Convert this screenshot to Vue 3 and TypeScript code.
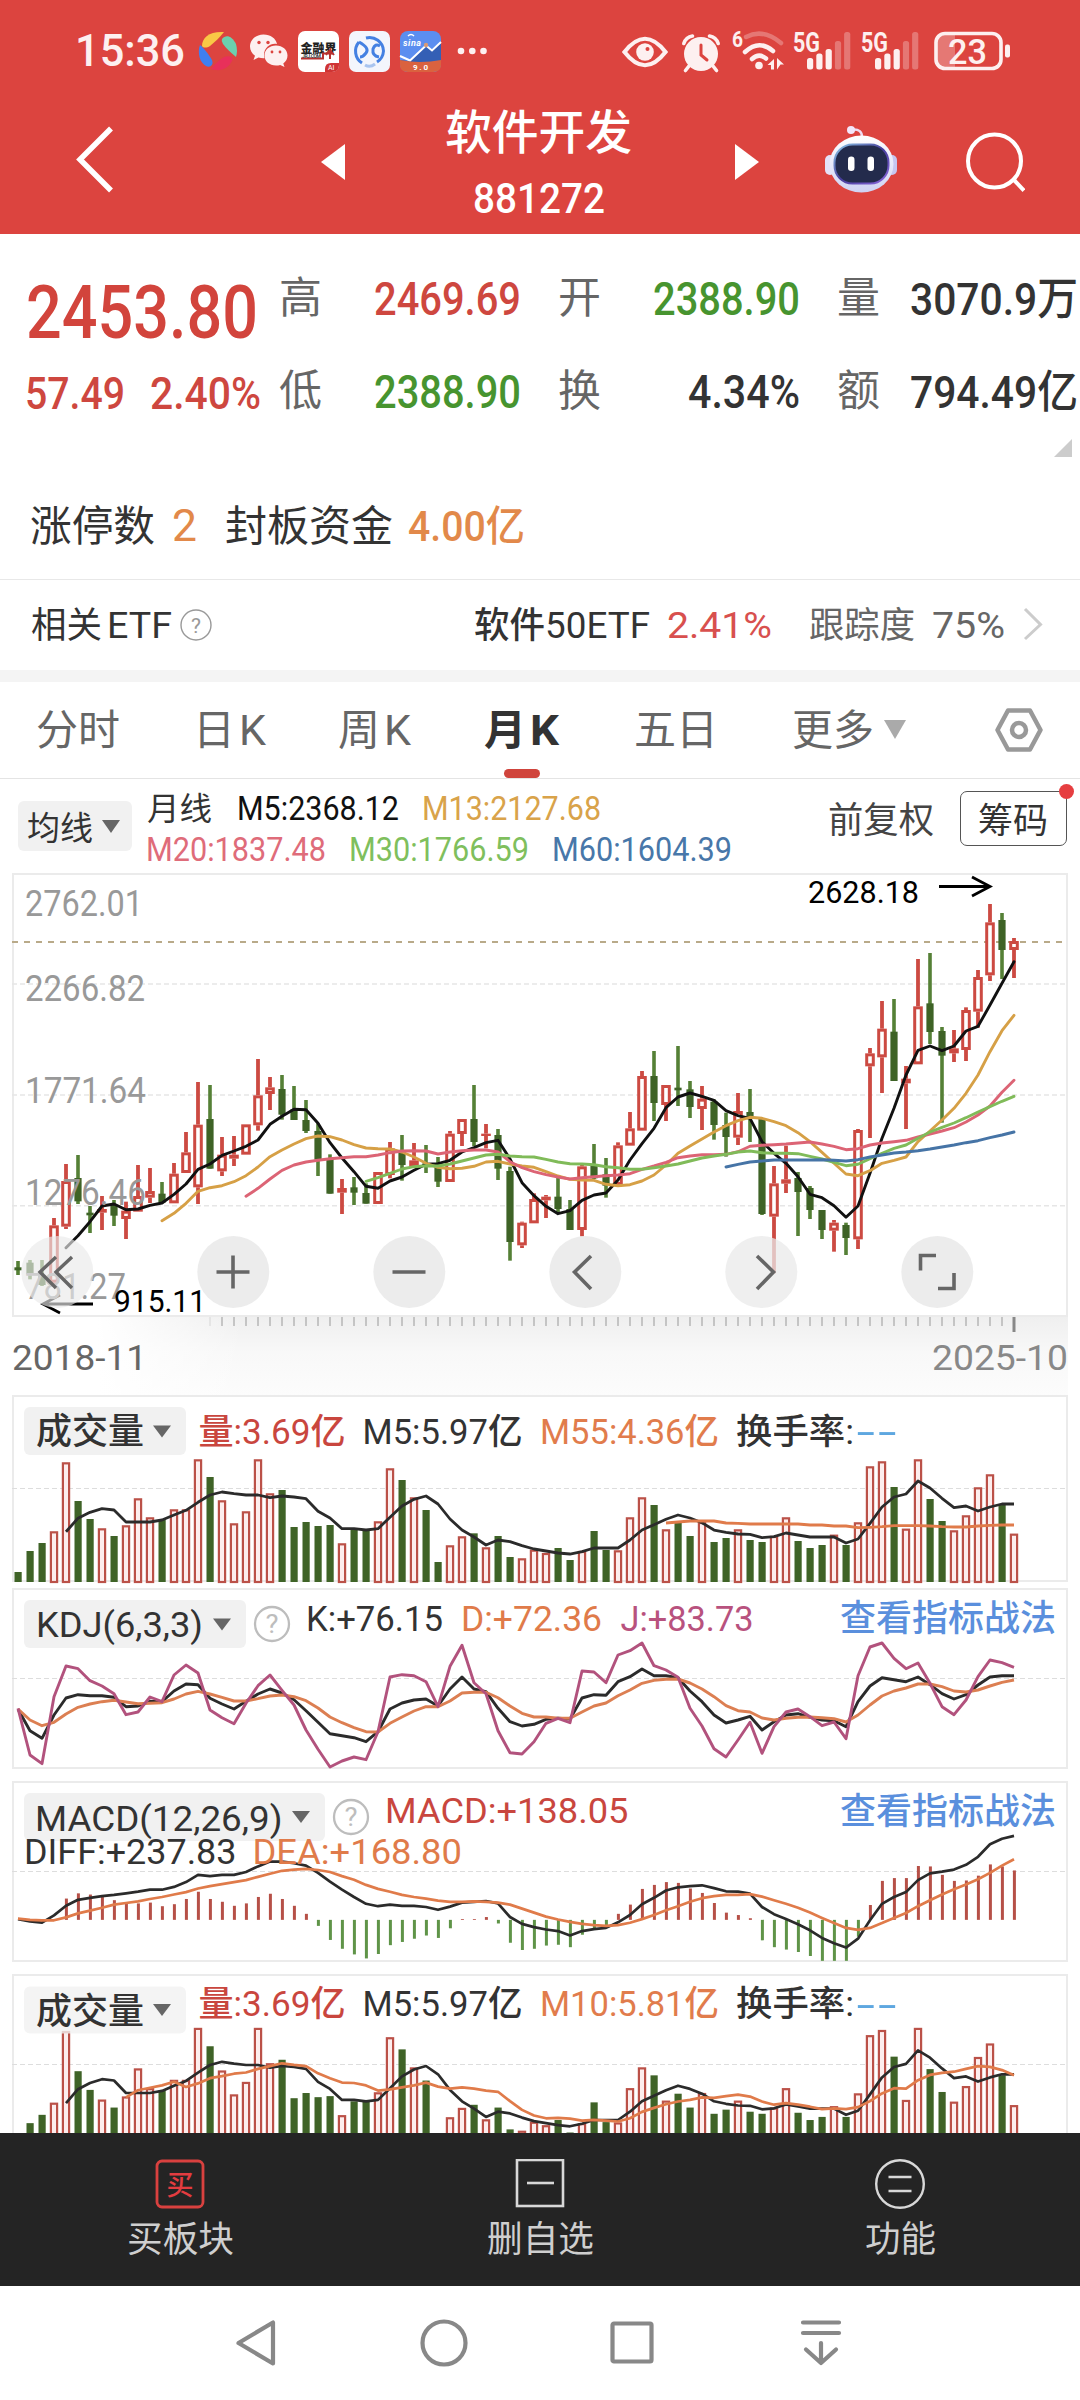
<script setup lang="ts">
import { defineComponent, h } from 'vue'

/* One line of text condensed to a given advance width; its bottom edge is the baseline. */
const Fit = defineComponent({
  props: {
    t: { type: String, required: true },
    w: { type: Number, required: true },
    s: { type: Number, required: true },
  },
  setup(p) {
    return () =>
      h('svg', { class: 'fit', width: p.w, height: p.s }, [
        h('text', { x: 0, y: p.s, 'font-size': p.s, textLength: p.w, lengthAdjust: 'spacingAndGlyphs' }, p.t),
      ])
  },
})

type Label = { t: string; x: number; y: number; w: number; s: number; c: string; b?: number }
type Scale = (v: number) => number

const X0 = 18
const STEP = 12
const px = (i: number) => X0 + STEP * i
const r1 = (v: number) => Math.round(v * 10) / 10
const line = (start: number, vals: number[], y: Scale) =>
  vals.map((v, k) => `${px(start + k)},${r1(y(v))}`).join(' ')

/* vertical scales of the panels */
const yMain: Scale = (v) => 1030 + v / 3
const yVol: Scale = (v) => 1390 + v / 3
const yMacd: Scale = (v) => 1770 + v / 2.489
const yVol2: Scale = (v) => 2155.7 - ((577 - v) / 3) * 1.039

/* high, body top, body bottom, low */
const ohlc: number[][] = [
  [693, 712, 721, 735], [690, 698, 733, 748], [690, 735, 765, 768], [564, 586, 758, 765], [402, 453, 590, 597],
  [375, 444, 514, 522], [528, 548, 556, 609], [498, 537, 548, 600], [510, 525, 557, 588], [515, 542, 567, 627],
  [405, 498, 545, 545], [414, 483, 503, 519], [456, 491, 518, 520], [399, 431, 520, 520], [306, 367, 429, 429],
  [156, 284, 472, 522], [165, 267, 416, 416], [321, 374, 424, 438], [318, 374, 386, 408], [283, 283, 374, 374],
  [87, 196, 286, 302], [141, 172, 192, 240], [135, 177, 254, 269], [168, 238, 270, 270], [210, 270, 303, 309],
  [280, 303, 389, 438], [373, 390, 491, 491], [447, 474, 488, 552], [441, 472, 488, 525], [460, 489, 521, 521],
  [426, 426, 522, 522], [336, 355, 435, 445], [315, 365, 405, 452], [339, 391, 408, 408], [345, 400, 405, 429],
  [381, 400, 455, 471], [303, 311, 456, 456], [267, 267, 312, 348], [165, 267, 336, 348], [282, 311, 318, 355],
  [297, 315, 416, 450], [410, 423, 636, 692], [575, 578, 646, 654], [490, 507, 580, 580], [495, 500, 511, 564],
  [444, 500, 537, 550], [510, 537, 600, 600], [405, 409, 600, 619], [342, 408, 445, 447], [384, 433, 467, 503],
  [337, 346, 465, 468], [246, 295, 347, 347], [123, 138, 302, 302], [63, 138, 219, 273], [165, 165, 225, 273],
  [48, 173, 181, 228], [153, 178, 231, 264], [168, 206, 237, 300], [208, 215, 285, 329], [248, 285, 321, 380],
  [189, 243, 323, 345], [177, 246, 262, 336], [265, 267, 552, 555], [408, 460, 560, 730], [347, 448, 461, 489],
  [426, 444, 486, 618], [468, 474, 540, 567], [540, 540, 600, 627], [570, 578, 602, 665], [578, 585, 624, 675],
  [297, 300, 628, 657], [54, 70, 109, 324], [-87, -4, 82, 189], [-93, 5, 153, 153], [108, 146, 160, 297],
  [-213, -71, 103, 103], [-231, -80, 6, 42], [-9, 3, 77, 278], [0, 55, 70, 96], [-68, -60, 60, 93],
  [-180, -159, -55, -7], [-378, -323, -164, -147], [-351, -330, -240, -153], [-276, -267, -240, -156],
]
const rising =
  'gggrrggrgrrrgrrrgrrrrrggggg' + 'rggrrgrggrrgrggrrrggrggrrrgrggrgg' + 'rggrrgggrgrrrgrrggrrrrgr'
const up = ohlc.map((_, i) => rising[i] === 'r')

const ma5 = [653, 617, 575, 528, 522, 539, 537, 526, 519, 493, 462, 418, 402, 376, 363, 349, 330, 283, 259, 238, 239, 280, 338, 384, 425, 469, 475, 453, 441, 421, 403, 401, 391, 366, 353, 338, 331, 387, 458, 497, 529, 551, 542, 511, 495, 489, 450, 390, 341, 295, 233, 201, 189, 199, 211, 242, 257, 265, 335, 370, 400, 440, 493, 503, 527, 562, 528, 430, 325, 235, 135, 61, 48, 62, 48, 3, -11, -75, -140, -205]
const ma13 = [572, 550, 520, 484, 473, 467, 455, 437, 411, 380, 360, 342, 326, 318, 320, 330, 344, 354, 356, 357, 366, 381, 400, 412, 416, 415, 409, 396, 394, 402, 408, 412, 425, 438, 448, 450, 451, 463, 467, 464, 453, 435, 405, 370, 348, 327, 306, 287, 272, 262, 265, 275, 287, 308, 335, 367, 400, 432, 437, 422, 400, 391, 381, 335, 303, 270, 235, 190, 135, 65, 2, -44]
const ma20 = [499, 475, 447, 421, 405, 396, 391, 386, 383, 380, 380, 375, 368, 363, 362, 363, 372, 366, 362, 360, 360, 366, 395, 413, 425, 434, 441, 447, 443, 440, 437, 435, 431, 418, 408, 397, 383, 378, 374, 374, 373, 365, 349, 346, 344, 342, 339, 336, 342, 349, 359, 356, 345, 339, 335, 331, 321, 312, 303, 293, 276, 255, 228, 187, 151]
const ma30 = [454, 443, 430, 417, 410, 407, 408, 402, 393, 384, 375, 373, 378, 380, 381, 388, 396, 401, 402, 404, 410, 413, 418, 418, 413, 408, 402, 393, 384, 378, 373, 366, 363, 368, 370, 370, 371, 379, 387, 397, 407, 403, 386, 370, 355, 345, 325, 306, 292, 279, 263, 246, 230, 214, 199]
const ma60 = [411, 403, 396, 393, 390, 390, 390, 390, 389, 391, 393, 389, 381, 375, 369, 366, 362, 357, 351, 345, 338, 332, 323, 315, 306]

const vol = [546, 483, 459, 424, 217, 333, 387, 415, 438, 406, 325, 382, 388, 358, 358, 208, 261, 331, 400, 364, 208, 310, 300, 411, 396, 408, 405, 460, 420, 417, 394, 235, 270, 322, 360, 516, 466, 439, 430, 472, 438, 501, 505, 479, 489, 474, 510, 483, 423, 480, 481, 382, 322, 345, 418, 398, 438, 396, 456, 444, 418, 450, 456, 438, 382, 453, 474, 465, 434, 465, 397, 229, 214, 291, 416, 208, 327, 393, 421, 376, 292, 253, 345, 431]
const vol5 = [425, 385, 367, 356, 360, 396, 396, 396, 390, 375, 361, 337, 315, 306, 311, 315, 315, 323, 318, 321, 326, 364, 384, 416, 416, 420, 416, 382, 348, 328, 318, 342, 387, 420, 441, 465, 450, 455, 467, 477, 483, 489, 492, 485, 474, 474, 474, 450, 420, 404, 388, 375, 384, 398, 420, 427, 432, 433, 443, 440, 429, 435, 441, 441, 441, 459, 447, 400, 351, 321, 312, 273, 294, 325, 353, 348, 363, 351, 342, 342]
const vol55 = [399, 396, 393, 393, 393, 399, 400, 402, 402, 402, 402, 402, 405, 405, 408, 408, 413, 412, 410, 407, 407, 407, 408, 410, 411, 411, 408, 406, 405, 405]
const vol10 = [815, 797, 791, 785, 776, 789, 780, 767, 762, 756, 753, 744, 737, 730, 734, 737, 755, 767, 778, 779, 785, 798, 795, 790, 785, 778, 788, 793, 790, 793, 798, 801, 824, 846, 860, 867, 866, 868, 873, 871, 873, 875, 867, 851, 841, 832, 825, 821, 815, 816, 812, 808, 813, 825, 833, 829, 833, 838, 844, 842, 844, 839, 824, 805, 792, 793, 772, 759, 754, 751, 744, 737, 739, 747, 760]

const kdjK = [958, 1022, 1045, 975, 924, 914, 917, 917, 922, 950, 948, 934, 935, 903, 882, 884, 925, 942, 957, 934, 912, 897, 909, 929, 962, 997, 1031, 1037, 1043, 1055, 1025, 957, 939, 930, 927, 948, 897, 861, 897, 905, 955, 995, 1008, 1003, 988, 985, 987, 924, 914, 916, 875, 860, 837, 857, 857, 863, 903, 935, 975, 999, 990, 979, 1020, 995, 975, 971, 982, 990, 992, 1010, 935, 888, 863, 869, 875, 861, 884, 911, 927, 914, 885, 861, 857, 857]
const kdjD = [957, 990, 1007, 997, 972, 952, 942, 935, 931, 936, 941, 940, 938, 927, 912, 904, 912, 922, 933, 933, 926, 918, 915, 920, 932, 954, 981, 998, 1013, 1025, 1026, 1000, 981, 963, 950, 950, 933, 909, 907, 907, 923, 948, 970, 981, 981, 985, 985, 966, 948, 939, 917, 900, 880, 871, 868, 867, 879, 897, 920, 947, 962, 966, 984, 990, 985, 982, 981, 983, 986, 996, 975, 945, 918, 903, 894, 882, 882, 890, 903, 906, 900, 888, 877, 870]
const kdjJ = [955, 1095, 1121, 920, 828, 836, 872, 888, 911, 974, 966, 921, 935, 855, 825, 849, 960, 983, 1001, 940, 887, 855, 901, 945, 1020, 1078, 1131, 1113, 1101, 1109, 1025, 861, 854, 857, 875, 950, 829, 766, 878, 911, 1022, 1088, 1092, 1055, 1000, 985, 998, 843, 846, 878, 795, 782, 759, 827, 840, 862, 955, 1008, 1076, 1101, 1050, 997, 1090, 1010, 966, 957, 980, 1007, 996, 1046, 857, 771, 759, 805, 836, 819, 880, 950, 974, 930, 860, 810, 818, 832]

const diff = [371, 377, 380, 362, 338, 323, 318, 314, 311, 307, 303, 298, 298, 291, 279, 261, 264, 261, 261, 254, 240, 228, 228, 232, 238, 256, 278, 298, 316, 333, 339, 335, 338, 338, 341, 348, 340, 330, 328, 326, 332, 366, 383, 391, 397, 401, 412, 401, 396, 393, 379, 361, 334, 318, 300, 292, 289, 287, 294, 302, 303, 308, 341, 359, 371, 384, 399, 418, 431, 442, 420, 374, 333, 316, 304, 274, 257, 253, 248, 236, 216, 185, 171, 164]
const dea = [370, 373, 374, 374, 367, 357, 350, 343, 335, 331, 327, 321, 316, 310, 304, 295, 289, 284, 279, 274, 266, 258, 251, 248, 246, 249, 254, 264, 273, 286, 296, 303, 311, 316, 320, 325, 328, 328, 327, 328, 330, 335, 345, 355, 365, 372, 378, 383, 386, 388, 386, 380, 371, 361, 349, 339, 328, 319, 314, 311, 311, 309, 315, 324, 333, 343, 355, 368, 381, 393, 398, 393, 381, 368, 356, 339, 324, 310, 297, 285, 272, 256, 238, 222]
const macd = [320, 307, 310, 314, 324, 332, 332, 330, 339, 334, 321, 303, 321, 328, 338, 332, 316, 308, 321, 338, 358, 388, 423, 445, 459, 469, 458, 436, 428, 420, 412, 418, 394, 371, 371, 366, 382, 430, 448, 445, 437, 435, 441, 410, 396, 387, 358, 335, 296, 286, 279, 281, 295, 306, 331, 355, 361, 369, 424, 441, 447, 453, 463, 475, 475, 475, 415, 336, 276, 269, 269, 239, 240, 261, 276, 275, 263, 235, 240, 250]

const bars = (y: Scale, base: number) => vol.map((v, i) => ({ i, up: up[i], y: y(v), h: base - y(v) }))
const volBars = bars(yVol, 1582)
const vol2Bars = bars(yVol2, 2155)
const ticks = Array.from({ length: 67 }, (_, k) => 16 + k)

const mainLabels: Label[] = [
  { t: '2762.01', x: 25, y: 916, w: 118, s: 36, c: '#999' },
  { t: '2266.82', x: 25, y: 1001, w: 120, s: 36, c: '#999' },
  { t: '1771.64', x: 25, y: 1103, w: 121, s: 36, c: '#999' },
  { t: '1276.46', x: 25, y: 1204.7, w: 121, s: 36, c: '#999' },
  { t: '781.27', x: 25, y: 1299, w: 101, s: 36, c: '#999' },
  { t: '2628.18', x: 808, y: 903.3, w: 111, s: 31, c: '#000', b: 400 },
  { t: '915.11', x: 114, y: 1312, w: 92, s: 31, c: '#000', b: 400 },
  { t: '2018-11', x: 12, y: 1369.7, w: 135, s: 35, c: '#666' },
  { t: '2025-10', x: 932, y: 1369.7, w: 136, s: 35, c: '#888' },
]
const volLegend = (base: number, chipBase: number, m: string): Label[] => [
  { t: '成交量', x: 36, y: chipBase, w: 108, s: 36, c: '#333' },
  { t: '量:3.69亿', x: 198.5, y: base, w: 147, s: 35.5, c: '#c9463e' },
  { t: 'M5:5.97亿', x: 362.5, y: base, w: 160, s: 35.5, c: '#333' },
  { t: m, x: 540, y: base, w: 179, s: 35.5, c: '#e17c4c' },
  { t: '换手率:', x: 736, y: base, w: 118, s: 35.5, c: '#333' },
]
const vol1Labels = volLegend(1443.5, 1444, 'M55:4.36亿')
const vol2Labels = volLegend(2016.3, 2023.5, 'M10:5.81亿')
const kdjLabels: Label[] = [
  { t: 'KDJ(6,3,3)', x: 36, y: 1637.3, w: 167, s: 35, c: '#333' },
  { t: 'K:+76.15', x: 306, y: 1630.7, w: 137, s: 35, c: '#333' },
  { t: 'D:+72.36', x: 461, y: 1630.7, w: 141, s: 35, c: '#e07b4a' },
  { t: 'J:+83.73', x: 620.5, y: 1630.7, w: 133, s: 35, c: '#b8527e' },
  { t: '查看指标战法', x: 840, y: 1631, w: 216, s: 36, c: '#5a8fdd' },
]
const macdLabels: Label[] = [
  { t: 'MACD(12,26,9)', x: 35, y: 1831, w: 247.5, s: 35, c: '#333' },
  { t: 'MACD:+138.05', x: 385, y: 1823.3, w: 243.5, s: 35, c: '#c9463e' },
  { t: 'DIFF:+237.83', x: 24, y: 1864, w: 212.5, s: 35, c: '#333' },
  { t: 'DEA:+168.80', x: 252.5, y: 1864, w: 209.5, s: 35, c: '#e07b4a' },
  { t: '查看指标战法', x: 840, y: 1823.8, w: 216, s: 36, c: '#5a8fdd' },
]
const signals = [0, 1]
const signalBars = [
  [13, 58, 1], [22.3, 53.5, 1], [31.6, 49, 1], [40.9, 41, 0.3], [50.1, 32, 0.3],
]
</script>

<template>
  <div class="screen">
    <header class="top">
      <div class="status">
        <Fit class="clock" t="15:36" :w="110" :s="43.5" />
        <svg class="s-swirl" width="40" height="40" viewBox="0 0 40 40">
          <path d="M4 15C4 6 12 0 26 1C22 6 17 11 12 15C9 17 5 17 4 15Z" fill="#f9c846" />
          <path d="M24 8C28 3 34 5 38 13Q40 20 38 26C33 22 28 17 25 13Q23 10 24 8Z" fill="#6cd0ae" />
          <path d="M2 14C6 17 11 24 14 29C16 34 12 37 8 35C2 32 -1 22 2 14Z" fill="#3f7ff0" />
          <path d="M13 38C16 34 21 29 26 26C32 24 36 27 34 30C30 38 22 41 13 38Z" fill="#e8305a" />
        </svg>
        <svg class="s-wechat" width="38" height="34" viewBox="0 0 38 34" fill="#fdf0f0">
          <path d="M13.500 0.500C6 .5 0 5.500 0 12.500c0 4 2 7 5 9.200L3.500 26l5-2.500c2 .6 4 .8 6 .7C12 15 20 8.500 27 10C26 4.500 20.500 .5 13.500 .5z" />
          <path d="M26 11.500c-6.500 0-11.500 4.300-11.500 10S19.500 31.500 26 31.500c1.500 0 3-.2 4.200-.6l4.300 2.200-1.200-3.600c2.700-2 4.200-4.700 4.200-8C37.500 15.800 32.500 11.500 26 11.500z" />
          <g fill="#dc443f"><circle cx="9" cy="8.500" r="1.700" /><circle cx="18" cy="8.500" r="1.700" /><circle cx="22" cy="18" r="1.400" /><circle cx="30" cy="18" r="1.400" /></g>
        </svg>
        <svg class="s-app" width="41" height="41" viewBox="0 0 41 41">
          <rect width="41" height="41" rx="7" fill="#fff" />
          <text x="2.500" y="22" font-size="12" font-weight="900" textLength="36" fill="#222">金融界</text>
          <path d="M3 27.500h22v-5h10M32 28v-9l-4 5M32 19l4 5" stroke="#b8312f" stroke-width="2" fill="none" />
          <text x="4" y="26.500" font-size="5" font-weight="700" textLength="19" fill="#444">JRJ.COM</text>
          <path d="M27 41v-3q0-6 6-6h8v2q0 7-7 7z" fill="#cf3434" />
          <text x="30" y="39" font-size="7" fill="#fff">AI</text>
        </svg>
        <svg class="s-app" width="41" height="41" viewBox="0 0 41 41">
          <rect width="41" height="41" rx="7" fill="#f3f5fc" />
          <g fill="none" stroke="#4480e2" stroke-width="3">
            <path d="M17 7A14 14 0 0 1 34.500 20A14 14 0 0 1 28 31" />
            <path d="M10 11A14 14 0 0 0 13 32" />
            <path d="M10 11Q21 17 17 22Q14 26 11 26M30 26Q23 25 24 18Q26 12 31 15" />
          </g>
          <path d="M16 34Q21 37 26 33" stroke="#a9c4ef" stroke-width="3" fill="none" />
        </svg>
        <svg class="s-app" width="41" height="41" viewBox="0 0 41 41">
          <rect width="41" height="41" rx="8" fill="#5b8ef0" />
          <path d="M0 29L10 30L26 15L32 20L41 12V33H0z" fill="#345fb5" />
          <path d="M0 25L10 29.500L26 14.500L32 19.500L41 11" fill="none" stroke="#fff" stroke-width="2" />
          <path d="M0 29q20 4 41 0v5q0 7-8 7H8q-8 0-8-7z" fill="#da623f" />
          <text x="3" y="15" font-size="9" font-weight="700" font-style="italic" textLength="18" fill="#fff">sina</text>
          <path d="M8 5q3-3 6 0" stroke="#fff" stroke-width="1.500" fill="none" />
          <circle cx="26" cy="14" r="2.200" fill="#d89a76" />
          <text x="13" y="39" font-size="8" font-weight="700" textLength="15" fill="#fff">9.0</text>
        </svg>
        <svg class="s-dots" width="30" height="8" viewBox="0 0 30 8" fill="#fdf0f0">
          <circle cx="4" cy="4" r="3.300" /><circle cx="15.300" cy="4" r="3.300" /><circle cx="26.500" cy="4" r="3.300" />
        </svg>
        <svg class="s-eye" width="46" height="32" viewBox="0 0 46 32">
          <path d="M2.500 16Q23-10.500 43.500 16Q23 42.500 2.500 16z" fill="none" stroke="#fdf0f0" stroke-width="4.200" />
          <circle cx="23" cy="16" r="8.800" fill="#fdf0f0" /><circle cx="25.500" cy="13" r="2" fill="#dc443f" />
        </svg>
        <svg class="s-alarm" width="38" height="38" viewBox="0 0 38 38">
          <circle cx="19" cy="20" r="17" fill="#fdf0f0" />
          <path d="M1.800 9.500Q4 3 10.500 2M36.200 9.500Q34 3 27.500 2M7 32l-3.500 4.500M31 32l3.500 4.500" fill="none" stroke="#fdf0f0" stroke-width="3.600" stroke-linecap="round" />
          <path d="M19 11v10l6 5" fill="none" stroke="#dc443f" stroke-width="3" stroke-linecap="round" />
        </svg>
        <svg class="s-wifi" width="54" height="42" viewBox="0 0 54 42">
          <text x="0" y="16.500" font-size="22" font-weight="700" textLength="11" lengthAdjust="spacingAndGlyphs" fill="#fdf0f0">6</text>
          <g fill="none" stroke="#fdf0f0" stroke-linecap="round">
            <path d="M14 7Q31-2 49 13" stroke-width="4.500" opacity=".3" />
            <path d="M13 22Q27 9 41 21" stroke-width="4.500" />
            <path d="M20 29Q27 22.500 34 28.500" stroke-width="4.500" />
          </g>
          <circle cx="27" cy="35.500" r="3.800" fill="#fdf0f0" />
          <path d="M42 29v10.500h-3V35h-3.500zM45 28l7 6.500h-3.500L45 39.500z" fill="#fdf0f0" />
        </svg>
        <svg v-for="n in signals" :key="n" class="s-signal" width="58" height="42" viewBox="0 30 58 42" fill="#fdf0f0">
          <text x="-1" y="51.500" font-size="27" font-weight="700" textLength="27" lengthAdjust="spacingAndGlyphs">5G</text>
          <rect v-for="b in signalBars" :key="b[0]" :x="b[0]" :y="b[1]" width="6.200" :height="69.500 - b[1]" rx="2.500" :opacity="b[2]" />
        </svg>
        <svg class="s-battery" width="77" height="40" viewBox="0 0 77 40">
          <path d="M3 9q0-6 6-6h12v34H9q-6 0-6-6z" fill="#fff" opacity=".28" />
          <rect x="2" y="2.500" width="65" height="35" rx="9" fill="none" stroke="#fdf0f0" stroke-width="3.600" />
          <rect x="71" y="13.500" width="5" height="13" rx="2" fill="#fdf0f0" />
          <text x="14" y="32.500" font-size="35" font-weight="500" textLength="39" lengthAdjust="spacingAndGlyphs" fill="#fdf0f0">23</text>
        </svg>
      </div>
      <div class="title-row">
        <svg class="back" width="40" height="68" viewBox="0 0 40 68"><path d="M36 3.500L5 34.500L36 65.500" fill="none" stroke="#fff" stroke-width="5.500" /></svg>
        <svg class="prev" width="24" height="36" viewBox="0 0 24 36"><path d="M24 0v36L0 18z" fill="#fff" /></svg>
        <div class="title">
          <Fit t="软件开发" :w="187" :s="46.500" />
          <Fit class="code" t="881272" :w="132" :s="42" />
        </div>
        <svg class="next" width="24" height="36" viewBox="0 0 24 36"><path d="M0 0v36L24 18z" fill="#fff" /></svg>
        <svg class="bot" width="74" height="68" viewBox="0 0 74 68">
          <defs>
            <linearGradient id="shell" x1="0" y1="0" x2="0" y2="1"><stop offset="0" stop-color="#fff" /><stop offset="1" stop-color="#cfd2f3" /></linearGradient>
            <linearGradient id="rim" x1="0" y1="0" x2="1" y2="1"><stop offset="0" stop-color="#8cc9e8" /><stop offset=".5" stop-color="#463c9c" /><stop offset="1" stop-color="#8c68dc" /></linearGradient>
          </defs>
          <path d="M38 12Q38 4 29 4.500" fill="none" stroke="#f0dcf2" stroke-width="2.500" />
          <circle cx="27" cy="5" r="4" fill="#f3e6fa" />
          <rect x="1" y="30" width="10" height="20" rx="5" fill="#e4e2f8" /><rect x="63" y="30" width="10" height="20" rx="5" fill="#c6c6f0" />
          <ellipse cx="37.500" cy="39" rx="32" ry="28.500" fill="url(#shell)" />
          <rect x="10.500" y="19.500" width="54" height="39" rx="18" fill="#232b4c" stroke="url(#rim)" stroke-width="2" />
          <rect x="24" y="31.500" width="6.500" height="14.500" rx="3.200" fill="#fff" /><rect x="43.500" y="31.500" width="6.500" height="14.500" rx="3.200" fill="#fff" />
        </svg>
        <svg class="search" width="60" height="62" viewBox="0 0 60 62" fill="none" stroke="#fff" stroke-width="4"><circle cx="29.500" cy="30" r="26.500" /><path d="M49 49l10 10.500" /></svg>
      </div>
    </header>

    <section class="quote">
      <div class="price">
        <Fit class="big red" t="2453.80" :w="232" :s="74" />
        <div class="change red"><Fit t="57.49" :w="100" :s="45" /><Fit t="2.40%" :w="111" :s="45" /></div>
      </div>
      <div class="stats">
        <Fit class="k" t="高" :w="43" :s="43" /><Fit class="red" t="2469.69" :w="147" :s="46" />
        <Fit class="k" t="开" :w="43" :s="43" /><Fit class="green" t="2388.90" :w="147" :s="46" />
        <Fit class="k" t="量" :w="43" :s="43" /><Fit t="3070.9万" :w="168" :s="45" />
        <Fit class="k" t="低" :w="43" :s="43" /><Fit class="green" t="2388.90" :w="147" :s="46" />
        <Fit class="k" t="换" :w="43" :s="43" /><Fit class="end" t="4.34%" :w="112" :s="46" />
        <Fit class="k" t="额" :w="43" :s="43" /><Fit t="794.49亿" :w="168" :s="45" />
      </div>
    </section>
    <div class="corner"></div>
    <section class="limits">
      <Fit t="涨停数" :w="125" :s="42" /><Fit class="orange" t="2" :w="25" :s="44" />
      <Fit t="封板资金" :w="168" :s="42" /><Fit class="orange strong" t="4.00亿" :w="117" :s="42" />
    </section>
    <section class="etf">
      <Fit t="相关" :w="71" :s="36" /><Fit t="ETF" :w="65" :s="37" />
      <svg class="help" width="32" height="32" viewBox="0 0 32 32"><circle cx="16" cy="16" r="15" fill="none" stroke="#999" stroke-width="1.400" /><text x="11" y="23.500" font-size="21" textLength="10" lengthAdjust="spacingAndGlyphs" fill="#999">?</text></svg>
      <Fit class="name" t="软件" :w="71" :s="36" /><Fit class="name" t="50ETF" :w="105" :s="37" />
      <Fit class="rise" t="2.41%" :w="105" :s="37" /><Fit class="grey" t="跟踪度" :w="106" :s="36" /><Fit class="grey" t="75%" :w="73" :s="37" />
      <svg class="help" width="22" height="34" viewBox="0 0 22 34"><path d="M3 2l15.500 15.500L3 32" fill="none" stroke="#ccc" stroke-width="3" /></svg>
    </section>
    <div class="band"></div>

    <nav class="tabs">
      <Fit t="分时" :w="84" :s="42" />
      <div class="tab"><Fit t="日" :w="42" :s="42" /><Fit t="K" :w="27" :s="43" /></div>
      <div class="tab"><Fit t="周" :w="42" :s="42" /><Fit t="K" :w="27" :s="43" /></div>
      <div class="tab active"><Fit t="月" :w="42" :s="42" /><Fit t="K" :w="29" :s="43" /></div>
      <Fit t="五日" :w="84" :s="42" />
      <Fit t="更多" :w="82" :s="42" />
      <svg class="more" width="22" height="19" viewBox="0 0 22 19"><path d="M0 0h22L11 19z" fill="#aaa" /></svg>
      <svg class="hex" width="48" height="46" viewBox="0 0 48 46" fill="none" stroke="#999" stroke-width="4.500" stroke-linejoin="round"><path d="M13 3.500h22L45.500 23L35 42.500H13L2.500 23z" /><circle cx="24" cy="23" r="7" /></svg>
    </nav>

    <section class="legend">
      <div class="chip"><Fit t="均线" :w="66" :s="33" /><svg width="18" height="13" viewBox="0 0 18 13"><path d="M0 0h18L9 13z" fill="#666" /></svg></div>
      <div class="averages">
        <div class="line1"><Fit class="reg" t="月线" :w="65" :s="32" /><Fit class="m5" t="M5:2368.12" :w="162" :s="33" /><Fit class="m13" t="M13:2127.68" :w="179" :s="33" /></div>
        <div class="line2"><Fit class="m20" t="M20:1837.48" :w="180" :s="33" /><Fit class="m30" t="M30:1766.59" :w="180" :s="33" /><Fit class="m60" t="M60:1604.39" :w="180" :s="33" /></div>
      </div>
      <Fit class="adjust" t="前复权" :w="106" :s="36" />
      <div class="chips-btn"><Fit t="筹码" :w="70" :s="35" /><i></i></div>
    </section>

    <svg class="chart" width="1080" height="522" viewBox="0 873 1080 522">
      <defs>
        <linearGradient id="axisX" x1="0" x2="1"><stop offset="0.080" stop-color="#fff" /><stop offset=".22" stop-color="#fff" stop-opacity="0" /></linearGradient>
        <linearGradient id="axisY" x1="0" y1="0" x2="0" y2="1"><stop offset="0" stop-color="#efefef" /><stop offset=".45" stop-color="#f8f8f8" /><stop offset="1" stop-color="#fcfcfc" /></linearGradient>
      </defs>
      <rect x="12" y="1317" width="1056" height="78" fill="url(#axisY)" /><rect x="12" y="1317" width="1056" height="78" fill="url(#axisX)" />
      <rect x="13" y="874" width="1054" height="442" fill="#fff" stroke="#ebebeb" stroke-width="2" />
      <path d="M12 984H1066M12 1095H1066M12 1205.700H1066" stroke="#e6e6e6" stroke-width="1.600" stroke-dasharray="5 3" />
      <path d="M12 942H1066" stroke="#b9aa89" stroke-width="2" stroke-dasharray="6 6" />
      <g v-for="(c, i) in ohlc" :key="i">
        <template v-if="up[i]">
          <rect :x="px(i) - 1.900" :y="yMain(c[0])" width="3.800" :height="(c[1] - c[0]) / 3" fill="#cc4a42" />
          <rect :x="px(i) - 1.900" :y="yMain(c[2])" width="3.800" :height="(c[3] - c[2]) / 3" fill="#cc4a42" />
          <rect v-if="c[2] - c[1] > 18" :x="px(i) - 3.300" :y="yMain(c[1]) + 1.500" width="6.600" :height="(c[2] - c[1]) / 3 - 3" fill="#fff" stroke="#cc4a42" stroke-width="3" />
          <rect v-else :x="px(i) - 4.800" :y="yMain(c[1])" width="9.600" :height="(c[2] - c[1]) / 3" fill="#cc4a42" />
        </template>
        <template v-else>
          <rect :x="px(i) - 1.800" :y="yMain(c[0])" width="3.600" :height="(c[3] - c[0]) / 3" fill="#558036" />
          <rect :x="px(i) - 3.600" :y="yMain(c[1])" width="7.200" :height="(c[2] - c[1]) / 3" fill="#3e6326" />
        </template>
      </g>
      <g fill="none" stroke-width="2.900" stroke-linejoin="round" stroke-linecap="round">
        <polyline :points="line(4, ma5, yMain)" stroke="#111" />
        <polyline :points="line(12, ma13, yMain)" stroke="#d6a046" />
        <polyline :points="line(19, ma20, yMain)" stroke="#dc6475" />
        <polyline :points="line(29, ma30, yMain)" stroke="#80bb59" />
        <polyline :points="line(59, ma60, yMain)" stroke="#4674a6" />
      </g>
      <g fill="none" stroke="#000" stroke-width="2.800"><path d="M939 886.500H989M972 877l18 9.500l-18 9.500" /><path d="M93 1304H43M60 1295l-17 9l17 9" /></g>
      <path v-for="i in ticks" :key="i" :d="`M${px(i)} 1317v9`" stroke="#a0a0a0" stroke-width="1.100" :opacity="i === 16 ? 0.3 : 1" />
      <path d="M1014 1317v15" stroke="#888" stroke-width="3" />
      <text v-for="l in mainLabels" :key="l.t" :x="l.x" :y="l.y" :font-size="l.s" :fill="l.c" :font-weight="l.b ?? 450" :textLength="l.w" lengthAdjust="spacingAndGlyphs">{{ l.t }}</text>
      <circle v-for="n in 6" :key="n" :cx="57.300 + 176 * (n - 1)" cy="1272" r="36" fill="#e9e9e9" :fill-opacity="n === 1 ? 0.65 : n === 5 ? 0.75 : 0.88" />
      <g fill="none" stroke="#666" stroke-width="3.600">
        <path d="M56 1257l-16 15l16 16M72 1257l-16 15l16 16" stroke-width="3.400" />
        <path d="M216.500 1272h33M233 1255.500v33M392.500 1272h33" />
        <path d="M591 1256l-16.500 16l16.500 17M757 1256l16.500 16L757 1289" />
        <path d="M936 1255.500h-15.500v15M938 1288.500h16v-15.500" />
      </g>
    </svg>

    <svg class="chart" width="1080" height="193" viewBox="0 1395 1080 193">
      <rect x="13" y="1396" width="1054" height="185" fill="#fff" stroke="#ebebeb" stroke-width="2" />
      <path d="M12 1488.500H1066" stroke="#ddd" stroke-dasharray="5 3" stroke-width="1.200" />
      <template v-for="b in volBars" :key="b.i">
        <rect v-if="b.up" :x="px(b.i) - 3.100" :y="b.y + 1" width="6.200" :height="b.h - 1" fill="#fdeeee" stroke="#bb5148" stroke-width="2.200" />
        <rect v-else :x="px(b.i) - 3.500" :y="b.y" width="7.200" :height="b.h" fill="#3f6327" />
      </template>
      <g fill="none" stroke-width="2.800" stroke-linejoin="round">
        <polyline :points="line(4, vol5, yVol)" stroke="#2b2b2b" /><polyline :points="line(54, vol55, yVol)" stroke="#e07b4a" />
      </g>
      <rect x="24" y="1407" width="162" height="48" rx="6" fill="#f1f1f1" /><path d="M153 1425.500h18l-9 12z" fill="#666" />
      <text v-for="l in vol1Labels" :key="l.t" :x="l.x" :y="l.y" :font-size="l.s" :fill="l.c" :font-weight="l.b ?? 450" :textLength="l.w" lengthAdjust="spacingAndGlyphs">{{ l.t }}</text>
      <text class="dash" x="855" y="1443" font-size="36" textLength="43" lengthAdjust="spacingAndGlyphs">--</text>
    </svg>

    <svg class="chart" width="1080" height="193" viewBox="0 1588 1080 193">
      <rect x="13" y="1589" width="1054" height="179" fill="#fff" stroke="#ebebeb" stroke-width="2" />
      <path d="M12 1678.500H1066" stroke="#ddd" stroke-dasharray="5 3" stroke-width="1.200" />
      <g fill="none" stroke-width="2.900" stroke-linejoin="round">
        <polyline :points="line(0, kdjK, yVol)" stroke="#2b2b2b" /><polyline :points="line(0, kdjD, yVol)" stroke="#dc7f52" /><polyline :points="line(0, kdjJ, yVol)" stroke="#b2527d" />
      </g>
      <rect x="24" y="1600" width="222" height="48" rx="6" fill="#f1f1f1" /><path d="M213 1618.500h18l-9 12z" fill="#666" />
      <circle cx="272" cy="1624" r="17" fill="none" stroke="#bdbdbd" stroke-width="2.300" /><text x="265.500" y="1633" font-size="26" textLength="13" lengthAdjust="spacingAndGlyphs" fill="#bdbdbd">?</text>
      <text v-for="l in kdjLabels" :key="l.t" :x="l.x" :y="l.y" :font-size="l.s" :fill="l.c" :font-weight="l.b ?? 450" :textLength="l.w" lengthAdjust="spacingAndGlyphs">{{ l.t }}</text>
    </svg>

    <svg class="chart" width="1080" height="193" viewBox="0 1781 1080 193">
      <rect x="13" y="1782" width="1054" height="179" fill="#fff" stroke="#ebebeb" stroke-width="2" />
      <path d="M12 1871.500H1066" stroke="#ddd" stroke-dasharray="5 3" stroke-width="1.200" />
      <rect x="24" y="1793" width="301" height="48" rx="6" fill="#f1f1f1" /><path d="M292 1811h18l-9 12z" fill="#666" />
      <path v-for="(v, k) in macd" :key="k" :d="`M${px(k + 4) + 0.4} ${yMacd(373)}V${yMacd(v)}`" :stroke="v < 373 ? '#b65047' : '#5f9448'" stroke-width="3" />
      <g fill="none" stroke-width="2.700" stroke-linejoin="round">
        <polyline :points="line(0, diff, yMacd)" stroke="#2b2b2b" /><polyline :points="line(0, dea, yMacd)" stroke="#e07b4a" />
      </g>
      <circle cx="351" cy="1817" r="17" fill="none" stroke="#bdbdbd" stroke-width="2.300" /><text x="344.500" y="1826" font-size="26" textLength="13" lengthAdjust="spacingAndGlyphs" fill="#bdbdbd">?</text>
      <text v-for="l in macdLabels" :key="l.t" :x="l.x" :y="l.y" :font-size="l.s" :fill="l.c" :font-weight="l.b ?? 450" :textLength="l.w" lengthAdjust="spacingAndGlyphs">{{ l.t }}</text>
    </svg>

    <svg class="chart" width="1080" height="159" viewBox="0 1974 1080 159">
      <rect x="13" y="1975" width="1054" height="179" fill="#fff" stroke="#ebebeb" stroke-width="2" />
      <path d="M12 2064.500H1066" stroke="#ddd" stroke-dasharray="5 3" stroke-width="1.200" />
      <template v-for="b in vol2Bars" :key="b.i">
        <rect v-if="b.up" :x="px(b.i) - 3.100" :y="b.y + 1" width="6.200" :height="b.h - 1" fill="#fdeeee" stroke="#bb5148" stroke-width="2.200" />
        <rect v-else :x="px(b.i) - 3.500" :y="b.y" width="7.200" :height="b.h" fill="#3f6327" />
      </template>
      <g fill="none" stroke-width="2.700" stroke-linejoin="round">
        <polyline :points="line(4, vol5, yVol2)" stroke="#2b2b2b" /><polyline :points="line(9, vol10, yMacd)" stroke="#e07b4a" />
      </g>
      <rect x="24" y="1986.500" width="162" height="47" rx="6" fill="#f1f1f1" fill-opacity=".8" /><path d="M153 2004h18l-9 12z" fill="#666" />
      <text v-for="l in vol2Labels" :key="l.t" :x="l.x" :y="l.y" :font-size="l.s" :fill="l.c" :font-weight="l.b ?? 450" :textLength="l.w" lengthAdjust="spacingAndGlyphs">{{ l.t }}</text>
      <text class="dash" x="855" y="2015.500" font-size="36" textLength="43" lengthAdjust="spacingAndGlyphs">--</text>
    </svg>

    <footer class="actions">
      <div class="action">
        <svg width="50" height="50" viewBox="0 0 50 50"><rect x="2" y="2" width="46" height="46" rx="5" fill="none" stroke="#d9413f" stroke-width="2.800" /><text x="11.500" y="36" font-size="27" font-weight="500" textLength="27" fill="#e33c40">买</text></svg>
        <Fit t="买板块" :w="107" :s="36" />
      </div>
      <div class="action">
        <svg width="50" height="50" viewBox="0 0 50 50" fill="none" stroke="#d8d8d8" stroke-width="2.600"><rect x="2" y="1" width="46" height="46" /><path d="M12 24h27" /></svg>
        <Fit t="删自选" :w="107" :s="36" />
      </div>
      <div class="action">
        <svg width="52" height="50" viewBox="0 0 52 50" fill="none" stroke="#d8d8d8" stroke-width="2.400"><circle cx="26" cy="25" r="23.800" /><path d="M14.500 18h23M14.500 32h23" /></svg>
        <Fit t="功能" :w="71" :s="36" />
      </div>
    </footer>
    <div class="sysnav">
      <svg width="42" height="50" viewBox="0 0 42 50"><path d="M38 4.500v41L3.500 25z" /></svg>
      <svg width="50" height="50" viewBox="0 0 50 50"><circle cx="25" cy="25" r="21.500" /></svg>
      <svg width="46" height="50" viewBox="0 0 46 50"><rect x="3.500" y="5.500" width="39" height="38" rx="1.500" /></svg>
      <svg width="42" height="50" viewBox="0 0 42 50"><path d="M3 4.500h36M3 15h36M21 25v20M6 31.500l15 13.500l15-13.500" /></svg>
    </div>
  </div>
</template>

<style>
body {
  margin: 0;
}
.fit {
  display: block;
  overflow: visible;
}
.fit text {
  fill: currentColor;
}
</style>

<style scoped>
.screen {
  width: 1080px;
  height: 2400px;
  overflow: hidden;
  background: #fff;
  color: #333;
  font-family: Roboto, 'Noto Sans CJK SC', sans-serif;
}
svg {
  display: block;
  flex: none;
}
.dash {
  font-family: 'Liberation Sans', sans-serif;
  fill: #5ea7e0;
}
.top {
  height: 234px;
  background: #dc443f;
  color: #fff;
}
.status {
  display: flex;
  height: 101px;
  padding: 0 0 0 75px;
  align-items: center;
}
.status svg {
  margin-left: 10px;
  overflow: visible;
}
.status .clock {
  margin: -14px 13px 0 0;
  color: #fdf0f0;
  font-weight: 500;
}
.status .s-swirl {
  margin-left: 0;
  margin-top: 1px;
}
.status .s-wechat {
  margin-left: 12px;
  margin-top: 1px;
}
.status .s-app {
  margin-top: 1px;
}
.status .s-dots {
  margin-left: 16px;
}
.status .s-eye {
  margin-left: 135px;
  margin-top: 3px;
}
.status .s-alarm {
  margin-left: 14px;
  margin-top: 5px;
}
.status .s-wifi {
  margin-left: 12px;
  margin-top: 1px;
}
.status .s-signal {
  margin-left: 8px;
}
.status .s-signal + .s-signal {
  margin-left: 10px;
}
.status .s-battery {
  margin-left: 14px;
}
.title-row {
  display: flex;
  height: 133px;
}
.back {
  margin: 24px 0 0 75px;
}
.prev {
  margin: 43px 0 0 206px;
}
.title {
  display: flex;
  flex-direction: column;
  align-items: center;
  width: 187px;
  margin-left: 100px;
  padding-top: 1px;
  font-weight: 500;
}
.title .code {
  margin-top: 22px;
}
.next {
  margin: 43px 0 0 103px;
}
.bot {
  margin: 24px 0 0 65px;
}
.search {
  margin: 30px 0 0 67px;
}
.red {
  color: #ce473f;
}
.green {
  color: #47942f;
}
.orange {
  color: #e2894a;
}
.quote {
  display: flex;
  height: 205px;
  font-weight: 500;
}
.price {
  width: 255px;
  padding: 29.5px 0 0 26px;
}
.price .big {
  color: #d2443c;
}
.change {
  display: flex;
  gap: 25px;
  margin: 26px 0 0 -1px;
}
.stats {
  display: grid;
  grid-template-columns: 95px 184px 95px 184px 73px 170px;
  grid-template-rows: 46px 46px;
  row-gap: 47px;
  align-items: end;
  align-content: start;
  padding-top: 34.5px;
}
.stats .k {
  color: #666;
  font-weight: 400;
  margin-bottom: 2px;
}
.stats .end {
  margin-left: 35px;
}
.corner {
  width: 18px;
  height: 18px;
  margin-left: 1054px;
  background: #ccc;
  clip-path: polygon(100% 0, 100% 100%, 0 100%);
}
.limits {
  display: grid;
  grid-template-columns: 141.5px 53.5px 182.5px 117px;
  align-items: end;
  height: 83.5px;
  padding: 0 0 38.5px 30px;
  border-bottom: 1px solid #e8e8e8;
}
.limits .strong {
  font-weight: 500;
}
.etf {
  display: grid;
  grid-template-columns: 76.5px 73px 293.5px 71.5px 121.5px 142.5px 123px 90px 22px;
  align-items: end;
  height: 58px;
  padding: 0 0 32px 30.5px;
}
.etf .help {
  margin-bottom: -3px;
}
.etf .name {
  font-weight: 450;
}
.etf .rise {
  color: #d8504e;
}
.etf .grey {
  color: #666;
}
.band {
  height: 12px;
  background: #f4f4f4;
}
.tabs {
  display: grid;
  grid-template-columns: 157.5px 145px 146px 149.5px 158.5px 91.5px 111px 48px;
  align-items: end;
  height: 63px;
  padding: 0 0 33px 35.5px;
  border-bottom: 1px solid #e4e4e4;
  color: #666;
}
.tab {
  display: flex;
  position: relative;
  gap: 4px;
  align-items: flex-end;
}
.active {
  color: #333;
  font-weight: 700;
}
.active::after {
  content: '';
  position: absolute;
  left: 20px;
  bottom: -33px;
  width: 36px;
  height: 9px;
  border-radius: 5px;
  background: #d0443c;
}
.more {
  margin-bottom: 6px;
}
.hex {
  margin-bottom: -8px;
}
.legend {
  display: flex;
  height: 94px;
  font-weight: 450;
}
.chip {
  display: flex;
  align-items: center;
  width: 105px;
  height: 50px;
  margin: 22px 15px 0 18px;
  padding-left: 9px;
  border-radius: 6px;
  background: #f1f1f1;
  font-weight: 400;
}
.chip .fit {
  margin: -6px 9px 0 0;
}
.averages {
  width: 681px;
}
.line1,
.line2 {
  display: flex;
  align-items: flex-end;
  height: 33px;
}
.line1 {
  padding-top: 8px;
}
.line2 {
  margin-top: 7.5px;
  margin-left: -1px;
  gap: 23px;
}
.line1 .m5 {
  margin: 0 23px 0 24.5px;
  color: #111;
}
.reg {
  font-weight: 400;
}
.m13 {
  color: #d9a34a;
}
.m20 {
  color: #df6c7a;
}
.m30 {
  color: #7fbf5d;
}
.m60 {
  color: #4877a9;
}
.adjust {
  margin-top: 18px;
  color: #444;
  font-weight: 400;
}
.chips-btn {
  position: relative;
  box-sizing: border-box;
  width: 107px;
  height: 55px;
  margin: 12px 0 0 26px;
  padding: 6px 0 0 17px;
  border: 1.5px solid #555;
  border-radius: 7px;
  font-weight: 400;
}
.chips-btn i {
  position: absolute;
  top: -8px;
  right: -8px;
  width: 15px;
  height: 15px;
  border-radius: 50%;
  background: #e63e40;
}
.actions {
  display: flex;
  height: 153px;
  background: #242424;
  color: #cfcfcf;
}
.action {
  display: flex;
  flex-direction: column;
  align-items: center;
  width: 360px;
  box-sizing: border-box;
  padding-top: 26px;
}
.action .fit {
  margin-top: 7px;
}
.sysnav {
  display: flex;
  height: 82px;
  padding: 32px 0 0 235px;
}
.sysnav svg {
  fill: none;
  stroke: #888;
  stroke-width: 4.2;
  stroke-linejoin: round;
  stroke-linecap: round;
}
.sysnav svg + svg {
  margin-left: 142px;
}
.sysnav svg + svg + svg {
  margin-left: 140px;
}
.sysnav svg + svg + svg + svg {
  margin-left: 145px;
}
</style>
